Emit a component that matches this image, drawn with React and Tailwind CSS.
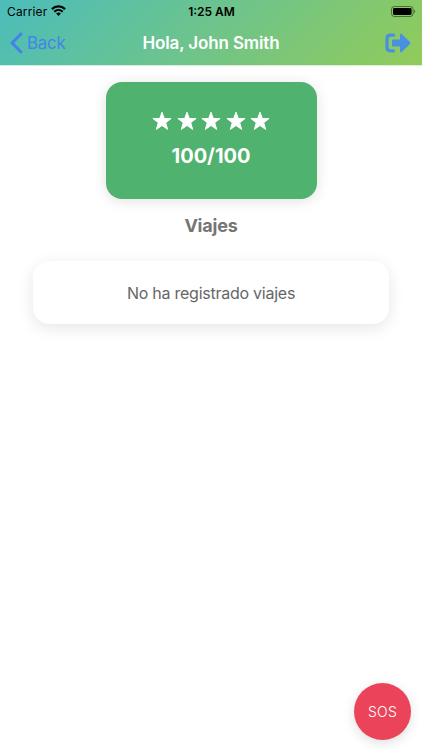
const STARS = [1, 2, 3, 4, 5]

function WifiIcon() {
  return (
    <svg className="ml-[4px] -mt-[3px] h-[11px] w-[15px]" viewBox="0 0 15 11" fill="none" stroke="#000">
      <path d="M0.9 4.1C4.7 0.4 10.3 0.4 14.1 4.1" strokeWidth="2.2" />
      <path d="M3.3 6.7C5.7 4.4 9.3 4.4 11.7 6.7" strokeWidth="2.1" />
      <path d="M7.5 10.9L5.1 8.5C6.5 7.2 8.5 7.2 9.9 8.5Z" fill="#000" stroke="none" />
    </svg>
  )
}

function BatteryIcon() {
  return (
    <svg className="h-[11px] w-[25px]" viewBox="0 0 25 11">
      <rect x="0.5" y="0.5" width="21.6" height="10" rx="2.8" fill="none" stroke="#000" strokeOpacity="0.45" />
      <rect x="2" y="2" width="18.6" height="7" rx="1.4" fill="#000" />
      <path d="M23.2 3.8C24.6 4.3 24.6 6.7 23.2 7.2Z" fill="#000" fillOpacity="0.5" />
    </svg>
  )
}

function StatusBar() {
  return (
    <div className="grid h-5 grid-cols-[1fr_auto_1fr] items-center pl-[7px] pr-[6px] text-xs leading-5 text-black">
      <div className="flex items-center pt-[2px]">
        <span className="tracking-[0.15px]">Carrier</span>
        <WifiIcon />
      </div>
      <span className="pt-[2px] text-center font-semibold">1:25 AM</span>
      <div className="flex justify-end">
        <BatteryIcon />
      </div>
    </div>
  )
}

function Header() {
  return (
    <header className="h-[66px] border-b border-white/70 bg-[linear-gradient(135deg,#4bbdbb_0%,#92cb59_100%)] bg-origin-border">
      <StatusBar />
      <div className="grid h-[46px] grid-cols-[1fr_auto_1fr] items-center px-[10px]">
        <button className="flex items-center text-[17px] text-[#4583e8]">
          <svg className="mr-[4px] h-[22px] w-[13px]" viewBox="0 0 13 22" fill="none" stroke="currentColor" strokeWidth="3">
            <path d="M11.8 1.1L2.2 11L11.8 20.9" />
          </svg>
          <span className="pt-px tracking-[-0.3px]">Back</span>
        </button>
        <h1 className="pt-px text-[17px] font-semibold tracking-[-0.13px] text-white">Hola, John Smith</h1>
        <button className="mr-[1.5px] justify-self-end text-[#4a90e2]">
          <svg className="h-5 w-[26px]" viewBox="0 0 26 20">
            <path d="M8.6 2.2H5.5Q2 2.2 2 5.5V14.5Q2 17.8 5.5 17.8H8.6" fill="none" stroke="currentColor" strokeWidth="3.2" strokeLinecap="round" />
            <path d="M8 6.6H15V2Q15 -0.5 17 1.2L25 8.9Q26 10 25 11.1L17 18.8Q15 20.5 15 18V13.4H8Q7 13.4 7 12.4V7.6Q7 6.6 8 6.6Z" fill="currentColor" />
          </svg>
        </button>
      </div>
    </header>
  )
}

function ScoreCard() {
  return (
    <div className="mt-4 flex h-[117px] w-[211px] flex-col items-center rounded-[16px] bg-[#4fb26e] pt-[29px] text-white shadow-[0_2px_14px_rgba(0,0,0,0.12)]">
      <div className="flex gap-[4.5px]">
        {STARS.map(n => (
          <svg key={n} className="h-[20px] w-[20px]" viewBox="0 0 20 19" fill="#fff" stroke="#fff" strokeWidth="1" strokeLinejoin="round">
            <path d="M10 0.7L12.3 7H19.1L13.7 11.2L15.7 17.9L10 14L4.3 17.9L6.3 11.2L0.9 7H7.7Z" />
          </svg>
        ))}
      </div>
      <p className="mt-[11px] text-[20px] font-bold leading-7">100/100</p>
    </div>
  )
}

export default function App() {
  return (
    <div className="relative h-[750px] w-[422px] overflow-hidden bg-white font-['Inter',sans-serif]">
      <Header />
      <main className="flex flex-col items-center">
        <ScoreCard />
        <h2 className="mt-[13px] text-[18px] font-bold leading-7 tracking-[-0.2px] text-[#757575]">Viajes</h2>
        <div className="mt-[21px] flex h-[63px] w-[356px] items-center justify-center rounded-[16px] bg-white text-base tracking-[-0.25px] text-[#666] shadow-[0_4px_16px_rgba(0,0,0,0.1)]">
          No ha registrado viajes
        </div>
      </main>
      <button className="absolute bottom-[10px] right-[11px] size-[57px] rounded-full bg-[#eb445a] text-sm font-light tracking-[0.2px] text-white shadow-[0_3px_12px_rgba(0,0,0,0.13)]">
        SOS
      </button>
    </div>
  )
}
